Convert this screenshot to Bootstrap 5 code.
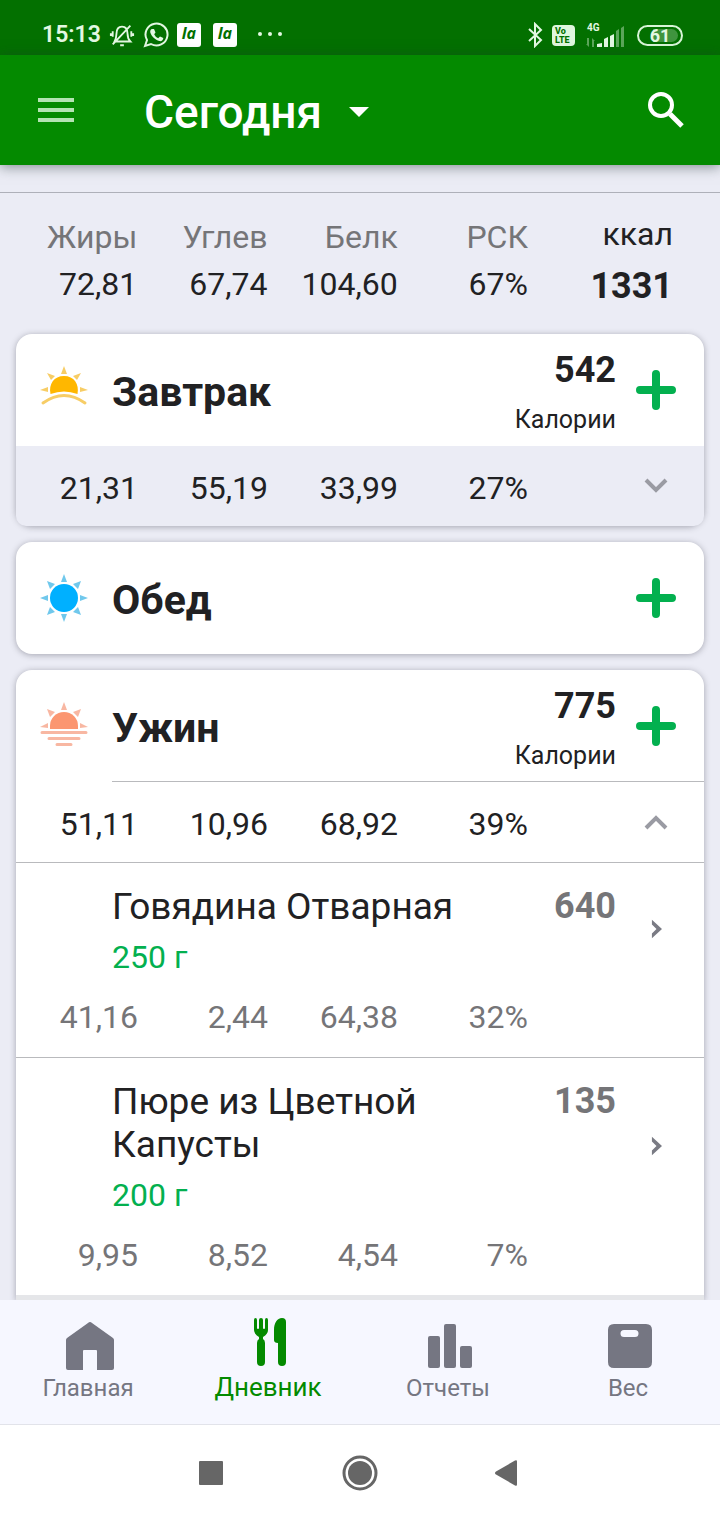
<!DOCTYPE html>
<html lang="ru">
<head>
<meta charset="utf-8">
<meta name="viewport" content="width=device-width, initial-scale=1">
<title>Дневник питания</title>
<link rel="stylesheet" href="https://cdn.jsdelivr.net/npm/bootstrap@5.3.0/dist/css/bootstrap.min.css">
<style>
  :root { --ink: #212123; --soft: #757578; --page: #ebecf5; --line: #b9babd; --accent: #03b04f; --brand: #048a00; }
  body { font-family: Roboto, "Liberation Sans", sans-serif; color: var(--ink); background: var(--page); }
  svg { display: block; flex: none; }
  button { border: 0; background: none; padding: 0; color: inherit; }
  .status-bar { background: #037000; color: #e3f8e2; padding: 15px 37px 0 42px; height: 55px; font-size: 23px; line-height: 40px; font-weight: 600; }
  .volte { width: 23px; height: 21px; border-radius: 4px; background: #dff7de; color: #037000; font: 800 9px/9px Roboto, sans-serif; padding: 2px 2px 0 3px; }
  .app-chip { width: 24px; height: 24px; border-radius: 3px; background: #fff; color: #037000; font: italic 700 16px/21px "Open Sans", sans-serif; text-align: center; }
  .battery { width: 46px; height: 21px; border: 2px solid #d8f5d7; border-radius: 11px; padding: 2px 3px; }
  .battery-fill { height: 100%; border-radius: 7px; background: linear-gradient(90deg, transparent 30%, #3f943e 30%); font-size: 18px; line-height: 14px; text-align: center; color: #e3f8e2; font-weight: 700; }
  .app-bar { background: var(--brand); height: 110px; padding: 0 36px 0 38px; box-shadow: 0 2px 12px rgba(30, 50, 50, .5); z-index: 2; }
  .title-button { font-size: 46px; line-height: 56px; font-weight: 500; color: #fff; margin-left: 70px; padding-top: 4px; gap: 27px; }
  .totals { margin-top: 27px; border-top: 1px solid #aeb0b9; padding: 20px 15px 23px 8px; }
  .totals table { table-layout: fixed; text-align: right; font-size: 32px; line-height: 47px; }
  .totals th { font-weight: 400; color: var(--soft); }
  .totals td { line-height: 43px; vertical-align: top; }
  .totals .energy { width: 176px; padding-right: 32px; }
  .totals th.energy { color: var(--ink); line-height: 40px; vertical-align: top; }
  .totals td.energy { font-size: 36px; line-height: 47px; font-weight: 700; }
  .meal { background: #fff; border-radius: 16px; box-shadow: 0 1px 6px rgba(60, 60, 75, .4); }
  .meal-head { height: 112px; padding: 0 16px 0 24px; }
  .meal-name { font-size: 41px; line-height: 48px; font-weight: 700; margin: 4px 0 0 24px; }
  .meal-energy { padding-top: 4px; }
  .kcal { font-size: 36px; line-height: 42px; font-weight: 700; }
  .kcal-unit { font-size: 25px; line-height: 32px; margin-top: 13px; }
  .add-button { width: 64px; height: 64px; margin-left: 8px; color: var(--accent); }
  .nutrients { display: grid; grid-template-columns: repeat(4, 1fr) 176px; margin-left: -8px; text-align: right; align-items: center; font-size: 32px; line-height: 40px; }
  .meal-sum { height: 80px; }
  .meal-sum .nutrients { padding-top: 22px; }
  .folded { background: var(--page); border-radius: 0 0 10px 10px; }
  .fold-button { width: 48px; height: 40px; margin-right: 24px; justify-self: end; color: #9a9ba3; }
  .rule-inset { margin: -1px 0 0 96px; border-top: 1px solid var(--line); }
  .food { border-top: 1px solid var(--line); color: var(--soft); text-decoration: none; display: block; padding: 22px 0 20px; }
  .food-main { padding-left: 96px; }
  .food-name { font-size: 37px; line-height: 43px; color: var(--ink); }
  .food-amount { font-size: 32px; line-height: 40px; color: var(--accent); margin-top: 9px; }
  .food-arrow { flex: none; width: 88px; padding: 0 0 4px 35px; }
  .food .nutrients { margin-top: 20px; }
  .next-meal { background: #e5e6e9; min-height: 5px; }
  .tab-bar { background: #f6f7ff; border-bottom: 1px solid #e2e3ea; height: 125px; color: #757682; }
  .tab-bar a { color: inherit; text-decoration: none; font-size: 24px; line-height: 32px; padding-top: 16px; }
  .tab-bar a span { padding-right: 4px; }
  .tab-bar a.current { color: var(--brand); font-size: 26px; line-height: 30px; }
  .system-bar { background: #fff; height: 95px; gap: 101px; color: #666; }
</style>
<script src="https://cdn.jsdelivr.net/npm/bootstrap@5.3.0/dist/js/bootstrap.bundle.min.js"></script>
</head>
<body class="d-flex flex-column min-vh-100">

<div class="status-bar d-flex justify-content-between">
  <div class="d-flex align-items-center">
    <span>15:13</span>
    <svg class="ms-2 me-2" width="26" height="26" viewBox="0 0 28 28" fill="none" stroke="currentColor" stroke-width="2"><path d="M6 21h17c-2-2-3-4-3-8 0-5-2-8-6-8s-6 3-6 8c0 4-1 6-2 8zM12 25h4M4 24 23 4M4 10v6M2 12v3M24 10v6M26 12v3"/></svg>
    <svg width="26" height="26" viewBox="0 0 26 26"><path fill="none" stroke="currentColor" stroke-width="2" d="M2 24l2-6a11 11 0 1 1 4 4z"/><path fill="currentColor" d="M9 7l2 0 1.500 3.500-1.300 1.700c1 2 2 3 4 4l1.800-1.800 3.300 1.600c0 2.500-2 3.500-4 3-4-1-8-5-9-8.500C6.800 8.800 8 7 9 7z"/></svg>
    <span class="app-chip ms-2 me-2">la</span>
    <span class="app-chip ms-1">la</span>
    <svg class="ms-3" width="32" height="8" viewBox="0 0 32 8" fill="currentColor"><circle cx="7" cy="3" r="2"/><circle cx="17" cy="3" r="2"/><circle cx="27" cy="3" r="2"/></svg>
  </div>
  <div class="d-flex align-items-center">
    <svg class="me-2" width="18" height="26" viewBox="0 0 18 26" fill="none" stroke="currentColor" stroke-width="2"><path d="M3 7l12 11-6 6V2l6 6L3 19"/></svg>
    <span class="volte">Vo LTE</span>
    <svg class="ms-2 me-2" width="42" height="28" viewBox="0 0 42 28" fill="currentColor"><text x="4" y="10" font-size="10" font-weight="700">4G</text><path d="M14 26v-3l5-1v4zM21 18l4-2v10h-4zM27 15l4-2v13h-4z"/><path opacity=".4" d="M33 10l3-2v18h-3zM38 7l3-2v21h-3zM4 17h2v9l-3-3h1zM9 17l3 3h-1v6H9z"/></svg>
    <div class="battery ms-1"><div class="battery-fill">61</div></div>
  </div>
</div>

<header class="app-bar d-flex align-items-center position-relative">
  <button type="button" aria-label="Меню"><svg width="36" height="36" viewBox="0 0 36 36" fill="#b4e3b3"><path d="M0 6h36v4H0zM0 16h36v4H0zM0 26h36v4H0z"/></svg></button>
  <button type="button" class="title-button d-flex align-items-center">Сегодня
    <svg width="20" height="11" viewBox="0 0 20 11" fill="#fff"><path d="M0 0h20L10 10z"/></svg></button>
  <button type="button" class="ms-auto" aria-label="Поиск"><svg width="36" height="36" viewBox="0 0 36 36" fill="none" stroke="#fff"><circle cx="13" cy="13" r="11" stroke-width="4"/><path stroke-width="5" d="M22 22l12 12"/></svg></button>
</header>

<main class="flex-grow-1 d-flex flex-column">
  <section class="totals">
    <table class="w-100">
      <thead><tr><th>Жиры</th><th>Углев</th><th>Белк</th><th>РСК</th><th class="energy">ккал</th></tr></thead>
      <tbody><tr><td>72,81</td><td>67,74</td><td>104,60</td><td>67%</td><td class="energy">1331</td></tr></tbody>
    </table>
  </section>

  <section class="meal mx-3 mb-3">
    <div class="meal-head d-flex align-items-center">
      <svg width="48" height="48" viewBox="0 0 48 48"><path fill="#ffb700" d="M10.500 28C8.500 18 14 10 24 10s15.500 8 13.500 18Q24 23 10.500 28z"/><g fill="#f7cd66"><path d="M24 0l3 8h-6zM7 7l8 3-4 4zM41 7l-8 3 4 4zM0 24l8-3v5zM48 24l-8-3v5z"/></g><path fill="none" stroke="#f7cd66" stroke-width="3" stroke-linecap="round" d="M3 37q21-15 42 0"/></svg>
      <h2 class="meal-name">Завтрак</h2>
      <div class="meal-energy ms-auto text-end"><div class="kcal">542</div><div class="kcal-unit">Калории</div></div>
      <button type="button" class="add-button" aria-label="Добавить в завтрак"><svg class="mx-auto" width="40" height="40" viewBox="0 0 40 40" stroke="currentColor" stroke-width="8" stroke-linecap="round"><path d="M20 4v32M4 20h32"/></svg></button>
    </div>
    <div class="meal-sum folded"><div class="nutrients">
      <span>21,31</span><span>55,19</span><span>33,99</span><span>27%</span>
      <button type="button" class="fold-button" aria-label="Развернуть"><svg class="mx-auto" width="24" height="24" viewBox="0 0 24 24" fill="none" stroke="currentColor" stroke-width="4"><path d="M2 4l10 10L22 4"/></svg></button>
    </div></div>
  </section>

  <section class="meal mx-3 mb-3">
    <div class="meal-head d-flex align-items-center">
      <svg width="48" height="48" viewBox="0 0 48 48"><circle cx="24" cy="24" r="14" fill="#00b0ff"/><path fill="#70c8ec" d="M24 0l3 8h-6zM7 7l8 3-5 5zM41 7l-8 3 5 5zM0 24l8-3v6zM48 24l-8-3v6zM24 48l3-8h-6zM7 41l8-3-5-5zM41 41l-8-3 5-5z"/></svg>
      <h2 class="meal-name">Обед</h2>
      <button type="button" class="add-button ms-auto" aria-label="Добавить в обед"><svg class="mx-auto" width="40" height="40" viewBox="0 0 40 40" stroke="currentColor" stroke-width="8" stroke-linecap="round"><path d="M20 4v32M4 20h32"/></svg></button>
    </div>
  </section>

  <section class="meal mx-3 rounded-bottom-0 flex-grow-1 d-flex flex-column">
    <div class="meal-head d-flex align-items-center">
      <svg width="48" height="48" viewBox="0 0 48 48"><path fill="#fb9671" d="M10 27V24a14 14 0 0 1 28 0v3z"/><path fill="#f8b7a2" d="M24 0l3 8h-6zM7 7l8 3-5 5zM41 7l-8 3 5 5zM0 25l8-4v5zM48 25l-8-4v5z"/><path stroke="#f8b7a2" stroke-width="3" stroke-linecap="round" d="M2 30.500h44M9 36.500h30M17 42.500h14"/></svg>
      <h2 class="meal-name">Ужин</h2>
      <div class="meal-energy ms-auto text-end"><div class="kcal">775</div><div class="kcal-unit">Калории</div></div>
      <button type="button" class="add-button" aria-label="Добавить в ужин"><svg class="mx-auto" width="40" height="40" viewBox="0 0 40 40" stroke="currentColor" stroke-width="8" stroke-linecap="round"><path d="M20 4v32M4 20h32"/></svg></button>
    </div>
    <div class="rule-inset"></div>
    <div class="meal-sum"><div class="nutrients">
      <span>51,11</span><span>10,96</span><span>68,92</span><span>39%</span>
      <button type="button" class="fold-button" aria-label="Свернуть"><svg class="mx-auto" width="24" height="24" viewBox="0 0 24 24" fill="none" stroke="currentColor" stroke-width="4"><path d="M2 16L12 6l10 10"/></svg></button>
    </div></div>
    <a href="#" class="food">
      <div class="food-main d-flex align-items-center">
        <div class="flex-grow-1">
          <div class="d-flex"><div class="food-name flex-grow-1">Говядина Отварная</div><div class="kcal">640</div></div>
          <div class="food-amount">250 г</div>
        </div>
        <div class="food-arrow"><svg width="11" height="20" viewBox="0 0 12 20" fill="#7a7b84"><path d="M1 0l11 10L1 20v-5l5-5-5-5z"/></svg></div>
      </div>
      <div class="nutrients"><span>41,16</span><span>2,44</span><span>64,38</span><span>32%</span></div>
    </a>
    <a href="#" class="food">
      <div class="food-main d-flex align-items-center">
        <div class="flex-grow-1">
          <div class="d-flex"><div class="food-name flex-grow-1 pe-5">Пюре из Цветной Капусты</div><div class="kcal">135</div></div>
          <div class="food-amount">200 г</div>
        </div>
        <div class="food-arrow"><svg width="11" height="20" viewBox="0 0 12 20" fill="#7a7b84"><path d="M1 0l11 10L1 20v-5l5-5-5-5z"/></svg></div>
      </div>
      <div class="nutrients"><span>9,95</span><span>8,52</span><span>4,54</span><span>7%</span></div>
    </a>
    <div class="next-meal flex-grow-1"></div>
  </section>
</main>

<nav class="tab-bar position-relative">
  <div class="row g-0 h-100 text-center">
    <a href="#" class="col d-flex flex-column align-items-center"><svg width="48" height="56" viewBox="0 0 48 56" fill="currentColor"><path d="M24 6q1 0 2 1l21 15q1 1 1 2v28q0 2-2 2H31V35q0-1-1-1H18q-1 0-1 1v19H2q-2 0-2-2V24q0-1 1-2L22 7q1-1 2-1z"/></svg><span>Главная</span></a>
    <a href="#" class="col d-flex flex-column align-items-center current" aria-current="page"><svg width="48" height="56" viewBox="0 0 48 56" fill="currentColor"><path d="M8 4q0-2 1.500-2T11 4v8q0 1 1 1t1-1V4q0-2 2-2t2 2v8q0 1 1 1t1-1V4q0-2 1.500-2T22 4v10q0 4-5 7v2q2 1 2 4v19q0 4-4 4t-4-4V27q0-3 2-4v-2q-5-3-5-7zM40 6q0-4-4-4c-5 0-8 5-8 12v10q0 3 4 3v19q0 4 4 4t4-4z"/></svg><span>Дневник</span></a>
    <a href="#" class="col d-flex flex-column align-items-center"><svg width="48" height="56" viewBox="0 0 48 56" fill="currentColor"><rect x="2" y="20" width="12" height="32" rx="2"/><rect x="18" y="8" width="12" height="44" rx="2"/><rect x="34" y="30" width="12" height="22" rx="2"/></svg><span>Отчеты</span></a>
    <a href="#" class="col d-flex flex-column align-items-center"><svg width="48" height="56" viewBox="0 0 48 56" fill="currentColor"><path fill-rule="evenodd" d="M8 8h32q6 0 6 6v32q0 6-6 6H8q-6 0-6-6V14q0-6 6-6zm10 6a3.500 3.500 0 0 0 0 7h11a3.500 3.500 0 0 0 0-7z"/></svg><span>Вес</span></a>
  </div>
</nav>

<div class="system-bar d-flex justify-content-center align-items-center">
  <button type="button" aria-label="Недавние"><svg width="48" height="48" viewBox="0 0 48 48" fill="currentColor"><rect x="12" y="12" width="24" height="24" rx="1"/></svg></button>
  <button type="button" aria-label="Домой"><svg width="48" height="48" viewBox="0 0 48 48" fill="currentColor"><circle cx="24" cy="24" r="12"/><circle cx="24" cy="24" r="16" fill="none" stroke="currentColor" stroke-width="3"/></svg></button>
  <button type="button" aria-label="Назад"><svg width="48" height="48" viewBox="0 0 48 48" fill="currentColor"><path d="M10 24q0-1 1-1.500l19-11q2-1 2 1v23q0 2-2 1l-19-11q-1-.5-1-1.500z"/></svg></button>
</div>
</body>
</html>
